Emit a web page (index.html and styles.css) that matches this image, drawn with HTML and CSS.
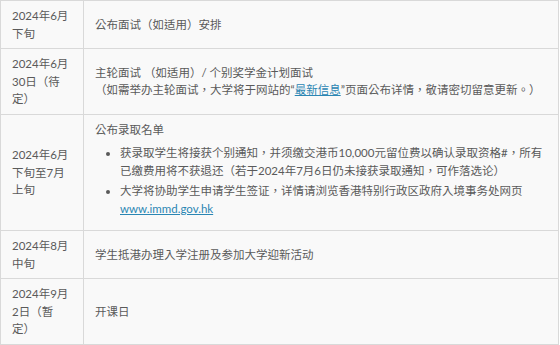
FILE: index.html
```html
<!DOCTYPE html>
<html lang="zh-Hant">
<head>
<meta charset="utf-8">
<link rel="stylesheet" href="styles.css">
</head>
<body>
<table class="schedule">
  <tr>
    <td class="date">2024年6月下旬</td>
    <td class="event">公布面试（如适用）安排</td>
  </tr>
  <tr>
    <td class="date">2024年6月30日（待定）</td>
    <td class="event">主轮面试 （如适用）/ 个别奖学金计划面试<br>（如需举办主轮面试，大学将于网站的“<a href="#">最新信息</a>”页面公布详情，敬请密切留意更新。）</td>
  </tr>
  <tr>
    <td class="date">2024年6月下旬至7月上旬</td>
    <td class="event">
      <p class="lead">公布录取名单</p>
      <ul class="notes">
        <li>获录取学生将接获个别通知，并须缴交港币10,000元留位费以确认录取资格#，所有已缴费用将不获退还（若于2024年7月6日仍未接获录取通知，可作落选论）</li>
        <li>大学将协助学生申请学生签证，详情请浏览香港特别行政区政府入境事务处网页 <a href="#">www.immd.gov.hk</a></li>
      </ul>
    </td>
  </tr>
  <tr>
    <td class="date">2024年8月中旬</td>
    <td class="event">学生抵港办理入学注册及参加大学迎新活动</td>
  </tr>
  <tr>
    <td class="date">2024年9月2日（暂定）</td>
    <td class="event">开课日</td>
  </tr>
</table>
</body>
</html>
```
FILE: styles.css
```css
body {
  margin: 0;
  background: #ffffff;
  font-family: Lato, "Noto Sans CJK TC", "Noto Sans CJK SC", sans-serif;
  font-size: 11.5px;
  line-height: 17.5px;
  color: #5a5a5a;
  text-spacing-trim: space-all;
}

.schedule {
  width: 559px;
  border-collapse: collapse;
  background: #f9f9f9;
}

.schedule td {
  border: 1px solid #d9d9d9;
  padding: 6px 11px;
  vertical-align: middle;
}

.schedule .date {
  width: 60px;
}

.schedule a {
  color: #2b86b3;
  text-decoration: underline;
}

.lead {
  margin: 0 0 6px;
}

.notes {
  margin: 0 0 7px;
  padding-left: 25px;
  list-style: disc;
}

.notes li {
  margin-bottom: 3px;
}

.notes li:last-child {
  margin-bottom: 0;
}
```
